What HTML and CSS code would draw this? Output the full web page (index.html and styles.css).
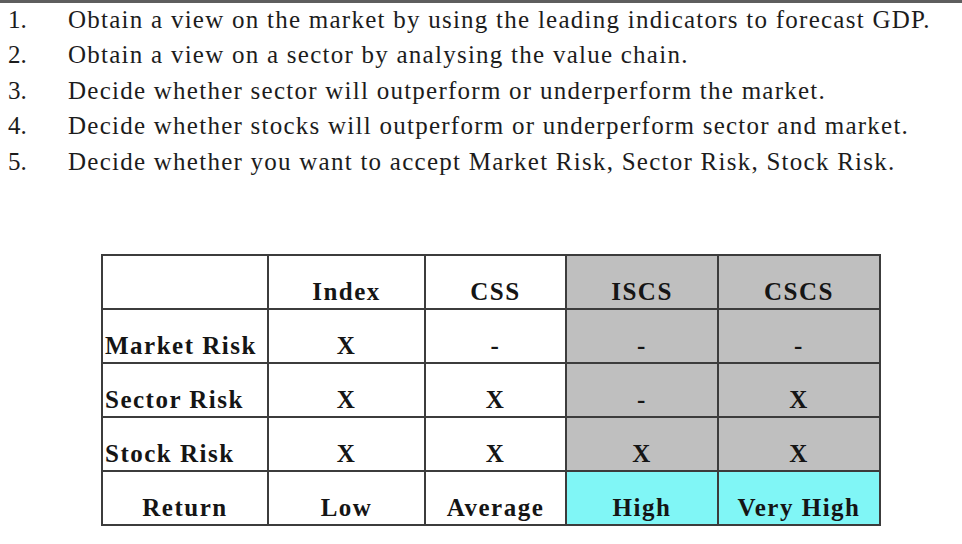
FILE: index.html
```html
<!DOCTYPE html>
<html>
<head>
<meta charset="utf-8">
<link rel="stylesheet" href="styles.css">
</head>
<body>
<div class="topbar"></div>
<ol class="steps">
  <li><span class="num">1.</span><span class="txt">Obtain a view on the market by using the leading indicators to forecast GDP.</span></li>
  <li><span class="num">2.</span><span class="txt">Obtain a view on a sector by analysing the value chain.</span></li>
  <li><span class="num">3.</span><span class="txt">Decide whether sector will outperform or underperform the market.</span></li>
  <li><span class="num">4.</span><span class="txt">Decide whether stocks will outperform or underperform sector and market.</span></li>
  <li><span class="num">5.</span><span class="txt">Decide whether you want to accept Market Risk, Sector Risk, Stock Risk.</span></li>
</ol>
<table class="risk">
  <colgroup>
    <col class="c0"><col class="c1"><col class="c2"><col class="c3"><col class="c4">
  </colgroup>
  <tr><td></td><td>Index</td><td>CSS</td><td class="g">ISCS</td><td class="g">CSCS</td></tr>
  <tr><td class="lbl">Market Risk</td><td>X</td><td>-</td><td class="g">-</td><td class="g">-</td></tr>
  <tr><td class="lbl">Sector Risk</td><td>X</td><td>X</td><td class="g">-</td><td class="g">X</td></tr>
  <tr><td class="lbl">Stock Risk</td><td>X</td><td>X</td><td class="g">X</td><td class="g">X</td></tr>
  <tr><td>Return</td><td>Low</td><td>Average</td><td class="c">High</td><td class="c">Very High</td></tr>
</table>
</body>
</html>
```
FILE: styles.css
```css
html, body {
  margin: 0;
  padding: 0;
  background: #ffffff;
}
body {
  width: 962px;
  height: 544px;
  overflow: hidden;
  font-family: "Liberation Serif", "DejaVu Serif", serif;
  color: #1c1c1c;
}
.topbar {
  height: 3px;
  background: #5e5e5e;
}
.steps {
  list-style: none;
  margin: -1px 0 0 0;
  padding: 0 0 0 8px;
}
.steps li {
  display: flex;
  height: 35.5px;
  align-items: center;
  font-size: 25px;
}
.num {
  width: 60px;
  flex: none;
}
.txt {
  white-space: nowrap;
  letter-spacing: 1.25px;
}
.risk {
  border-collapse: collapse;
  margin: 74px 0 0 101px;
  font-weight: bold;
  font-size: 25px;
  letter-spacing: 1.5px;
  color: #151515;
}
.c0 { width: 166px; }
.c1 { width: 157px; }
.c2 { width: 141px; }
.c3 { width: 152px; }
.c4 { width: 162px; }
.risk td {
  border: 2px solid #3c3c3c;
  height: 50px;
  padding: 0 0 2px 0;
  text-align: center;
  vertical-align: bottom;
  line-height: 28px;
}
.risk td.lbl {
  text-align: left;
  padding-left: 2px;
}
.risk td.g {
  background: #bfbfbf;
}
.risk td.c {
  background: #80f6f6;
}
```
